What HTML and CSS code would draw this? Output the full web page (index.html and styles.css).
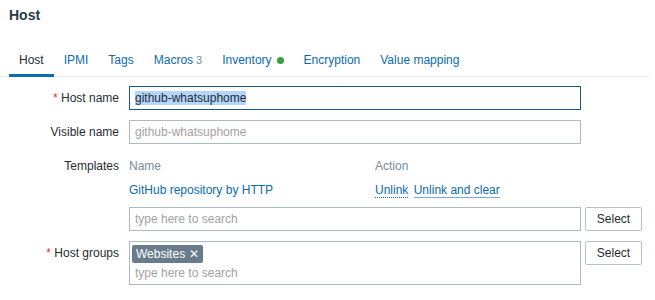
FILE: index.html
```html
<!DOCTYPE html>
<html lang="en">

<head>
    <meta charset="UTF-8">
    <meta name="viewport" content="width=device-width, initial-scale=1.0">
    <title>Host</title>
    <link rel="stylesheet" href="styles.css">
</head>

<body>

    <!-- Header -->
    <div class="page-title">Host</div>

    <!-- Tabs -->
    <ul class="tabs">
        <li class="tab active">Host</li>
        <li class="tab">IPMI</li>
        <li class="tab">Tags</li>
        <li class="tab">Macros <span class="count">3</span></li>
        <li class="tab">Inventory <span class="dot"></span></li>
        <li class="tab">Encryption</li>
        <li class="tab">Value mapping</li>
    </ul>

    <!-- Form -->
    <div class="form">
        <div class="row">
            <label class="label"><span class="req">*</span> Host name</label>
            <div class="textbox focused"><span class="sel">github-whatsuphome</span></div>
        </div>

        <div class="row">
            <label class="label">Visible name</label>
            <div class="textbox placeholder">github-whatsuphome</div>
        </div>

        <div class="row top">
            <label class="label">Templates</label>
            <div class="field">
                <table class="templates">
                    <tr>
                        <th class="col-name">Name</th>
                        <th>Action</th>
                    </tr>
                    <tr>
                        <td><a class="link">GitHub repository by HTTP</a></td>
                        <td><a class="link dotted">Unlink</a> <a class="link solid">Unlink and clear</a></td>
                    </tr>
                </table>
                <div class="with-button">
                    <div class="textbox placeholder">type here to search</div>
                    <button class="button">Select</button>
                </div>
            </div>
        </div>

        <div class="row top">
            <label class="label"><span class="req">*</span> Host groups</label>
            <div class="with-button">
                <div class="multiselect">
                    <span class="tag">Websites <span class="remove">&#x2715;</span></span>
                    <div class="ms-input">type here to search</div>
                </div>
                <button class="button">Select</button>
            </div>
        </div>
    </div>

</body>

</html>
```

FILE: styles.css
```css
body {
    margin: 0;
    font-family: 'Liberation Sans', Arial, sans-serif;
    font-size: 12px;
    color: #1f2c33;
    background: #fff;
}

/* Page header */
.page-title {
    padding: 7px 0 0 9px;
    font-size: 14px;
    line-height: 16px;
    font-weight: bold;
    color: #2b3a47;
}

/* Tabs */
.tabs {
    list-style: none;
    margin: 24px 5px 0 0;
    padding: 0 0 0 9px;
    display: flex;
    border-bottom: 1px solid #ebeef0;
}

.tab {
    padding: 6px 10px 7px;
    line-height: 14px;
    color: #0b6bb0;
    border-bottom: 3px solid transparent;
    margin-bottom: -1px;
    display: flex;
    align-items: center;
}

.tab.active {
    color: #1f2c33;
    border-bottom-color: #0b6bb0;
}

.count {
    color: #768d99;
    font-size: 11px;
    margin-left: 3px;
}

.dot {
    display: inline-block;
    width: 7px;
    height: 7px;
    border-radius: 50%;
    background: #36a03a;
    margin-left: 5px;
}

/* Form rows */
.form {
    padding-top: 9px;
}

.row {
    display: flex;
    align-items: center;
    margin-bottom: 10px;
}

.row.top {
    align-items: flex-start;
}

.label {
    width: 119px;
    margin-right: 10px;
    text-align: right;
    line-height: 24px;
}

.req {
    color: #e33734;
}

.textbox {
    box-sizing: border-box;
    width: 452px;
    height: 24px;
    padding: 0 5px;
    border: 1px solid #acbbc2;
    line-height: 22px;
    white-space: nowrap;
}

.textbox.focused {
    border-color: #17598f;
    color: #1f2c33;
}

.sel {
    background: #b4d5fc;
}

.placeholder {
    color: #a2a2a2;
}

/* Templates list */
.templates {
    border-collapse: collapse;
    width: 452px;
    margin-bottom: 5px;
}

.templates th,
.templates td {
    padding: 0;
    height: 24px;
    text-align: left;
    font-weight: normal;
}

.templates th {
    color: #768d99;
}

.col-name {
    width: 246px;
}

.link {
    color: #0b6bb0;
    text-decoration: none;
}

.link.dotted {
    border-bottom: 1px dotted #0b6bb0;
    margin-right: 2px;
}

.link.solid {
    border-bottom: 1px solid #7fa9cc;
}

.with-button {
    display: flex;
    align-items: flex-start;
}

.button {
    box-sizing: border-box;
    width: 57px;
    height: 24px;
    margin-left: 4px;
    border: 1px solid #b6c0c6;
    border-radius: 2px;
    background: #fff;
    color: #1f2c33;
    font-family: inherit;
    font-size: 12px;
    padding: 0;
}

/* Host groups multiselect */
.multiselect {
    box-sizing: border-box;
    width: 452px;
    height: 44px;
    border: 1px solid #acbbc2;
    padding: 3px 2px 0;
}

.tag {
    display: inline-block;
    background: #687c8b;
    color: #fff;
    padding: 0 4px;
    line-height: 18px;
    border-radius: 2px;
}

.remove {
    font-size: 12px;
    margin-left: 1px;
}

.ms-input {
    color: #a2a2a2;
    padding-left: 3px;
    line-height: 20px;
}
```
